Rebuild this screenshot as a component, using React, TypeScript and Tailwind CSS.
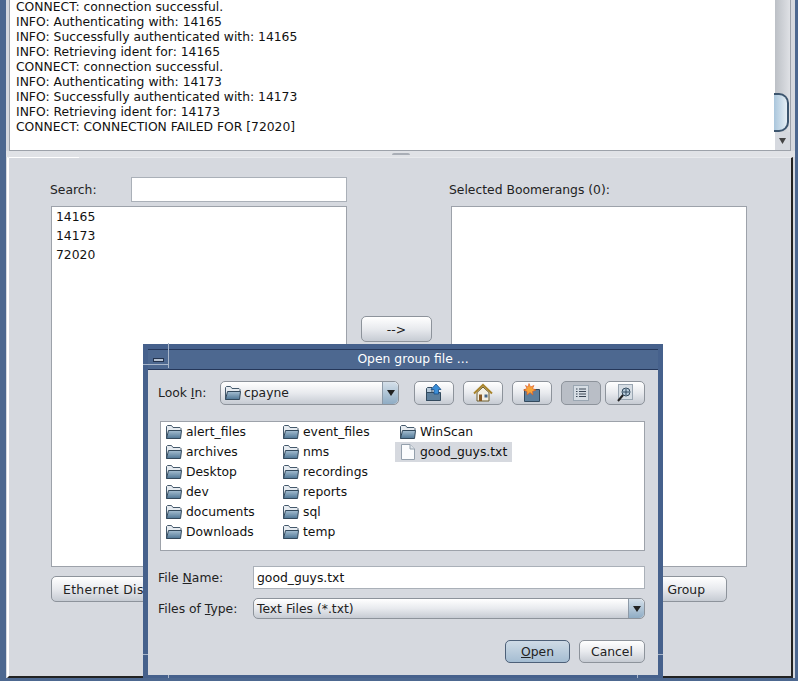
const font = { fontFamily: '"DejaVu Sans", sans-serif' };

const logLines = [
  'CONNECT: connection successful.',
  'INFO: Authenticating with: 14165',
  'INFO: Successfully authenticated with: 14165',
  'INFO: Retrieving ident for: 14165',
  'CONNECT: connection successful.',
  'INFO: Authenticating with: 14173',
  'INFO: Successfully authenticated with: 14173',
  'INFO: Retrieving ident for: 14173',
  'CONNECT: CONNECTION FAILED FOR [72020]',
];

const col1 = ['alert_files', 'archives', 'Desktop', 'dev', 'documents', 'Downloads'];
const col2 = ['event_files', 'nms', 'recordings', 'reports', 'sql', 'temp'];

const btn =
  'rounded-[5px] border border-[#8d939b] bg-gradient-to-b from-[#ffffff] via-[#e8eaee] to-[#c6cbd3] text-[#222]';

function Folder() {
  return (
    <svg width="16" height="16" viewBox="0 0 16 16" className="shrink-0">
      <defs>
        <linearGradient id="folderFront" x1="0" y1="0" x2="0" y2="1">
          <stop offset="0" stopColor="#a6bfd2" />
          <stop offset="1" stopColor="#4f7695" />
        </linearGradient>
      </defs>
      <path d="M0.5 14.5V2.5L1.5 1.5H5.5L7 3.5H14L15 4.5V7" fill="#e6ebf0" stroke="#44596c" />
      <path d="M0.5 14.5L2.5 6.5H15.5L14.5 14.5Z" fill="url(#folderFront)" stroke="#33495c" />
    </svg>
  );
}

function FileIcon() {
  return (
    <svg width="16" height="18" viewBox="0 0 16 18" className="shrink-0">
      <path d="M1.5 1.5H10L14.5 6V16.5H1.5Z" fill="#fbfcfd" stroke="#94a0ac" />
      <path d="M10 1.5V6H14.5" fill="#dfe4e9" stroke="#94a0ac" />
    </svg>
  );
}

function ComboArrow() {
  return (
    <span className="flex h-full w-[16px] shrink-0 items-center justify-center rounded-r-[5px] border-l border-[#8d9aa8] bg-gradient-to-b from-[#d5e0ea] to-[#8facc4]">
      <svg width="8" height="6" viewBox="0 0 8 6">
        <path d="M0 0H8L4 6Z" fill="#222" />
      </svg>
    </span>
  );
}

function FileRow({ name, selected }: { name: string; selected?: boolean }) {
  return (
    <div
      className={`flex h-[20px] w-fit items-center gap-[4px] whitespace-nowrap pl-[5px] pr-[5px] ${
        selected ? 'bg-[#d6d9df]' : ''
      }`}
    >
      {selected ? <FileIcon /> : <Folder />}
      <span>{name}</span>
    </div>
  );
}

function ToolButton({ active, children }: { active?: boolean; children: React.ReactNode }) {
  return (
    <div
      className={`flex h-[24px] w-[40px] items-center justify-center rounded-[5px] border border-[#8d939b] ${
        active ? 'bg-[#b9bec6]' : 'bg-gradient-to-b from-[#ffffff] via-[#e8eaee] to-[#c6cbd3]'
      }`}
    >
      {children}
    </div>
  );
}

function OpenDialog() {
  return (
    <div className="absolute left-[143px] top-[344px] flex h-[337px] w-[520px] flex-col border-x-[5px] border-t-[5px] border-b-[6px] border-[#46618c] bg-[#d6d9df]">
      {/* title bar */}
      <div className="flex h-[21px] shrink-0 items-center border-y border-[#25375a] bg-[#4d6890] text-white">
        <div className="flex h-full w-[20px] shrink-0 items-center justify-center">
          <span className="h-[4px] w-[11px] border border-[#24344f] bg-[#b8c4d4]" />
        </div>
        <span className="flex-1 text-center">Open group file ...</span>
      </div>

      {/* resize corner marks */}
      <span className="absolute -left-[5px] top-[15px] h-px w-[25px] bg-[#a9b7cb]" />
      <span className="absolute left-[20px] -top-[6px] h-[25px] w-px bg-[#a9b7cb]" />
      <span className="absolute -left-[5px] bottom-[20px] h-px w-[5px] bg-[#a9b7cb]" />
      <span className="absolute -right-[5px] bottom-[20px] h-px w-[5px] bg-[#a9b7cb]" />
      <span className="absolute -bottom-[6px] left-[20px] h-[6px] w-px bg-[#a9b7cb]" />
      <span className="absolute -bottom-[6px] right-[20px] h-[6px] w-px bg-[#a9b7cb]" />

      <div className="pl-[10px] pr-[13px] pt-[11px] text-[#222]">
        {/* look in row */}
        <div className="flex h-[24px] items-center">
          <span className="w-[62px] pt-px">
            Look <span className="underline">I</span>n:
          </span>
          <div className="flex h-[24px] w-[179px] items-center rounded-[5px] border border-[#8d939b] bg-gradient-to-b from-[#ffffff] via-[#e8eaee] to-[#c6cbd3] pl-[4px]">
            <Folder />
            <span className="ml-[3px] flex-1 pt-px">cpayne</span>
            <ComboArrow />
          </div>
          <div className="ml-auto flex gap-[9px]">
            <ToolButton>
              <svg width="20" height="20" viewBox="0 0 20 20">
                <path d="M2.5 17.5V5.5L3.5 4.5H8V17.5Z" fill="#b8cbdb" stroke="#334a5e" />
                <path d="M2.5 17.5V9.5H16.5V17.5Z" fill="#5d7f9c" stroke="#334a5e" />
                <path d="M12 1L17 6.5H14.5V11H10V6.5H7Z" fill="#3a8ed8" stroke="#1c4f86" strokeWidth="0.8" />
              </svg>
            </ToolButton>
            <ToolButton>
              <svg width="20" height="20" viewBox="0 0 20 20">
                <path d="M4 9.5L10 4L16 9.5V18H4Z" fill="#f3efe2" stroke="#6b5a2a" />
                <path d="M1 10.5L10 2L19 10.5" fill="none" stroke="#a8842c" strokeWidth="2" />
                <rect x="6" y="11.5" width="3" height="6.5" fill="#8a5a22" />
                <rect x="11.5" y="11.5" width="3" height="3" fill="#48688a" />
              </svg>
            </ToolButton>
            <ToolButton>
              <svg width="20" height="20" viewBox="0 0 20 20">
                <path d="M2.5 18.5V6.5H17.5V18.5Z" fill="#5d7f9c" stroke="#334a5e" />
                <path d="M7 0.5L8.5 4L12 2.5L10.5 5.5L14 7L10.5 8.5L11 12L8 9.5L5 12L5 8.5L1.5 7L5 5.5L3.5 2.5L6 4Z" fill="#f6a53a" stroke="#e0561c" strokeWidth="0.6" />
              </svg>
            </ToolButton>
            <div className="-mr-[5px]">
              <ToolButton active>
                <svg width="16" height="16" viewBox="0 0 16 16">
                  <rect x="0.5" y="0.5" width="15" height="15" fill="#d6dde4" stroke="#9aa6b2" />
                  <path d="M3 4H4.5M6 4H13M3 6.5H4.5M6 6.5H13M3 9H4.5M6 9H13M3 11.5H4.5M6 11.5H13" stroke="#3a4654" />
                </svg>
              </ToolButton>
            </div>
            <ToolButton>
              <svg width="20" height="20" viewBox="0 0 20 20">
                <rect x="3.5" y="1.5" width="14" height="15" fill="#d6dde4" stroke="#9aa6b2" />
                <circle cx="11" cy="9" r="4" fill="#b8cbdb" stroke="#334a5e" />
                <path d="M8 9H14M11 6V12" stroke="#334a5e" />
                <path d="M8 12L3 18" stroke="#222" strokeWidth="2" />
              </svg>
            </ToolButton>
          </div>
        </div>

        {/* file list */}
        <div className="ml-[2px] mt-[16px] grid h-[130px] grid-cols-[117px_117px_1fr] border border-[#9da2aa] bg-white text-[#111]">
          <div>
            {col1.map((n) => (
              <FileRow key={n} name={n} />
            ))}
          </div>
          <div>
            {col2.map((n) => (
              <FileRow key={n} name={n} />
            ))}
          </div>
          <div>
            <FileRow name="WinScan" />
            <FileRow name="good_guys.txt" selected />
          </div>
        </div>

        {/* name + type */}
        <div className="mt-[15px] flex h-[23px] items-center">
          <span className="w-[95px] pt-px">
            File <span className="underline">N</span>ame:
          </span>
          <div className="flex h-[23px] flex-1 items-center border border-[#aab0b8] bg-white pl-[3px] pt-px text-[#111]">good_guys.txt</div>
        </div>
        <div className="mt-[9px] flex h-[21px] items-center">
          <span className="w-[95px] pt-px">
            Files of <span className="underline">T</span>ype:
          </span>
          <div className="flex h-[21px] flex-1 items-center rounded-[5px] border border-[#8d939b] bg-gradient-to-b from-[#ffffff] via-[#e8eaee] to-[#c6cbd3] pl-[3px]">
            <span className="flex-1 pt-px">Text Files (*.txt)</span>
            <ComboArrow />
          </div>
        </div>

        {/* buttons */}
        <div className="mt-[21px] flex justify-end gap-[9px]">
          <div className="flex h-[23px] w-[65px] items-center justify-center rounded-[5px] border border-[#4d6078] bg-gradient-to-b from-[#cfdbe6] to-[#a5bdd2] pt-px">
            <span>
              <span className="underline">O</span>pen
            </span>
          </div>
          <div className={`flex h-[23px] w-[66px] items-center justify-center pt-px ${btn}`}>Cancel</div>
        </div>
      </div>
    </div>
  );
}

export default function App() {
  return (
    <div
      className="relative flex h-[681px] w-[798px] flex-col overflow-hidden border-b-[3px] border-l-[6px] border-r-[3px] border-[#4d6890] bg-[#d6d9df] text-[12.35px] text-[#222]"
      style={font}
    >
      {/* log panel */}
      <div className="ml-[3px] flex h-[151px] w-[782px] shrink-0 border-x border-b border-[#9da2aa] bg-white">
        <div className="flex-1 overflow-hidden pl-[6px] leading-[15px] text-[#111]">
          {logLines.map((l, i) => (
            <div key={i} className="whitespace-nowrap">
              {l}
            </div>
          ))}
        </div>
        <div className="relative flex w-[15px] shrink-0 flex-col justify-end bg-gradient-to-r from-[#bcc0c6] to-[#dfe1e5]">
          <div className="absolute -left-[1px] top-[93px] h-[39px] w-[15px] rounded-r-[10px] border-y-2 border-r-2 border-[#3c556e] bg-gradient-to-r from-[#aac6dc] to-[#e6eff5]" />
          <div className="flex h-[18px] items-center justify-center bg-[#d6d9df]">
            <svg width="7" height="6" viewBox="0 0 7 6">
              <path d="M0 0H7L3.5 6Z" fill="#444" />
            </svg>
          </div>
        </div>
      </div>

      {/* splitter */}
      <div className="flex h-[6px] shrink-0 items-start justify-center bg-[#e0e2e6]">
        <span className="mt-[2px] h-[2px] w-[18px] rounded-t-[3px] bg-[#a9aeb6]" />
      </div>

      {/* selection panel */}
      <div className="relative ml-[1px] mr-[2px] flex-1 border-b-2 border-l-2 border-r-2 border-t border-b-[#222] border-l-white border-r-[#222] border-t-[#e8eaed] pl-[42px] pt-[19px]">
        <span className="absolute -top-px left-0 h-px w-[70px] bg-white" />
        <div className="grid grid-cols-[296px_296px] gap-x-[104px]">
          <div>
            <div className="flex h-[25px] items-center">
              <span className="-ml-[1px] w-[81px] pt-[2px]">Search:</span>
              <div className="h-[25px] w-[216px] border border-[#aab0b8] bg-white" />
            </div>
            <div className="mt-[4px] h-[361px] border border-[#9da2aa] bg-white pl-[4px] pt-px leading-[19px] text-[#111]">
              <div>14165</div>
              <div>14173</div>
              <div>72020</div>
            </div>
          </div>
          <div>
            <div className="flex h-[25px] items-center">
              <span className="-ml-[2px] whitespace-nowrap pt-[2px]">Selected Boomerangs (0):</span>
            </div>
            <div className="mt-[4px] h-[361px] border border-[#9da2aa] bg-white" />
          </div>
        </div>

        <div className={`absolute left-[352px] top-[158px] flex h-[26px] w-[71px] items-center justify-center pt-[2px] ${btn}`}>--&gt;</div>

        <div className="mt-[9px] flex w-[676px] justify-between">
          <div className={`flex h-[26px] w-[200px] items-center whitespace-nowrap pl-[11px] pt-[2px] tracking-[0.35px] ${btn}`}>Ethernet Dis</div>
          <div className={`flex h-[26px] w-[200px] items-center justify-end pr-[21px] pt-[2px] ${btn}`}>Group</div>
        </div>
      </div>

      <div className="absolute -left-[6px] top-0">
        <OpenDialog />
      </div>
    </div>
  );
}
